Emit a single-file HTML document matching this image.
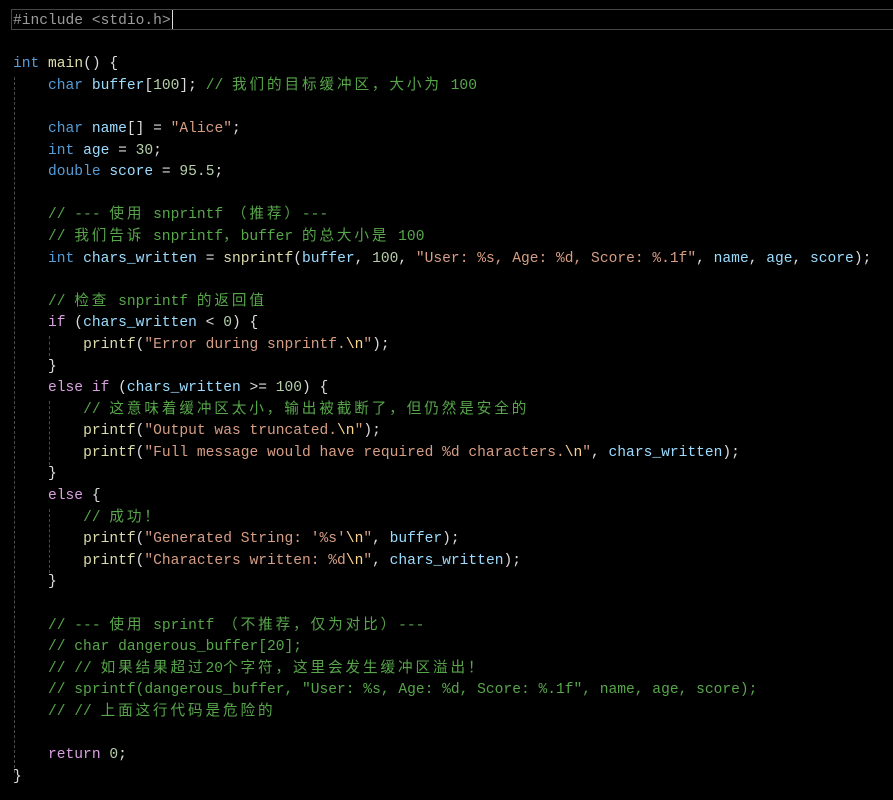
<!DOCTYPE html>
<html><head><meta charset="utf-8"><style>
html,body{margin:0;padding:0;background:#000;width:893px;height:800px;overflow:hidden}
pre{position:absolute;left:13px;top:11px;margin:0;font:14.6px/21.6px "Liberation Mono","Noto Sans CJK SC",monospace;color:#dcdcdc;white-space:pre}
.k{color:#569cd6}.c{color:#57a64a}.f{color:#dcdcaa}.v{color:#9cdcfe}.s{color:#d69d85}.n{color:#b5cea8}.p{color:#d8a0df}.e{color:#ffd68f}
.z{letter-spacing:2.9px}
.g{position:absolute;border-left:1px dashed #4a4a4a;width:0}
#hl{position:absolute;left:11px;top:9px;width:890px;height:21px;border:1px solid #464646;box-sizing:border-box}
#cur{position:absolute;left:172px;top:10px;width:1px;height:19px;background:#ddd}
</style></head><body>
<div id="hl"></div><div id="cur"></div>
<div class="g" style="left:14px;top:77px;height:696px"></div>
<div class="g" style="left:49px;top:336px;height:20px"></div>
<div class="g" style="left:49px;top:401px;height:64px"></div>
<div class="g" style="left:49px;top:509px;height:64px"></div>
<pre><span style="color:#9b9b9b">#include &lt;stdio.h&gt;</span>

<span class="k">int</span> <span class="f">main</span>() {
    <span class="k">char</span> <span class="v">buffer</span>[<span class="n">100</span>]; <span class="c">// <span class="z">我们的目标缓冲区，大小为</span> 100</span>

    <span class="k">char</span> <span class="v">name</span>[] = <span class="s">"Alice"</span>;
    <span class="k">int</span> <span class="v">age</span> = <span class="n">30</span>;
    <span class="k">double</span> <span class="v">score</span> = <span class="n">95.5</span>;

    <span class="c">// --- <span class="z">使用</span> snprintf <span class="z">（推荐）</span>---</span>
    <span class="c">// <span class="z">我们告诉</span> snprintf<span class="z">，</span>buffer <span class="z">的总大小是</span> 100</span>
    <span class="k">int</span> <span class="v">chars_written</span> = <span class="f">snprintf</span>(<span class="v">buffer</span>, <span class="n">100</span>, <span class="s">"User: %s, Age: %d, Score: %.1f"</span>, <span class="v">name</span>, <span class="v">age</span>, <span class="v">score</span>);

    <span class="c">// <span class="z">检查</span> snprintf <span class="z">的返回值</span></span>
    <span class="p">if</span> (<span class="v">chars_written</span> &lt; <span class="n">0</span>) {
        <span class="f">printf</span>(<span class="s">"Error during snprintf.</span><span class="e">\n</span><span class="s">"</span>);
    }
    <span class="p">else if</span> (<span class="v">chars_written</span> &gt;= <span class="n">100</span>) {
        <span class="c">// <span class="z">这意味着缓冲区太小，输出被截断了，但仍然是安全的</span></span>
        <span class="f">printf</span>(<span class="s">"Output was truncated.</span><span class="e">\n</span><span class="s">"</span>);
        <span class="f">printf</span>(<span class="s">"Full message would have required %d characters.</span><span class="e">\n</span><span class="s">"</span>, <span class="v">chars_written</span>);
    }
    <span class="p">else</span> {
        <span class="c">// <span class="z">成功！</span></span>
        <span class="f">printf</span>(<span class="s">"Generated String: '%s'</span><span class="e">\n</span><span class="s">"</span>, <span class="v">buffer</span>);
        <span class="f">printf</span>(<span class="s">"Characters written: %d</span><span class="e">\n</span><span class="s">"</span>, <span class="v">chars_written</span>);
    }

    <span class="c">// --- <span class="z">使用</span> sprintf <span class="z">（不推荐，仅为对比）</span>---</span>
    <span class="c">// char dangerous_buffer[20];</span>
    <span class="c">// // <span class="z">如果结果超过</span>20<span class="z">个字符，这里会发生缓冲区溢出！</span></span>
    <span class="c">// sprintf(dangerous_buffer, "User: %s, Age: %d, Score: %.1f", name, age, score);</span>
    <span class="c">// // <span class="z">上面这行代码是危险的</span></span>

    <span class="p">return</span> <span class="n">0</span>;
}</pre>
</body></html>
